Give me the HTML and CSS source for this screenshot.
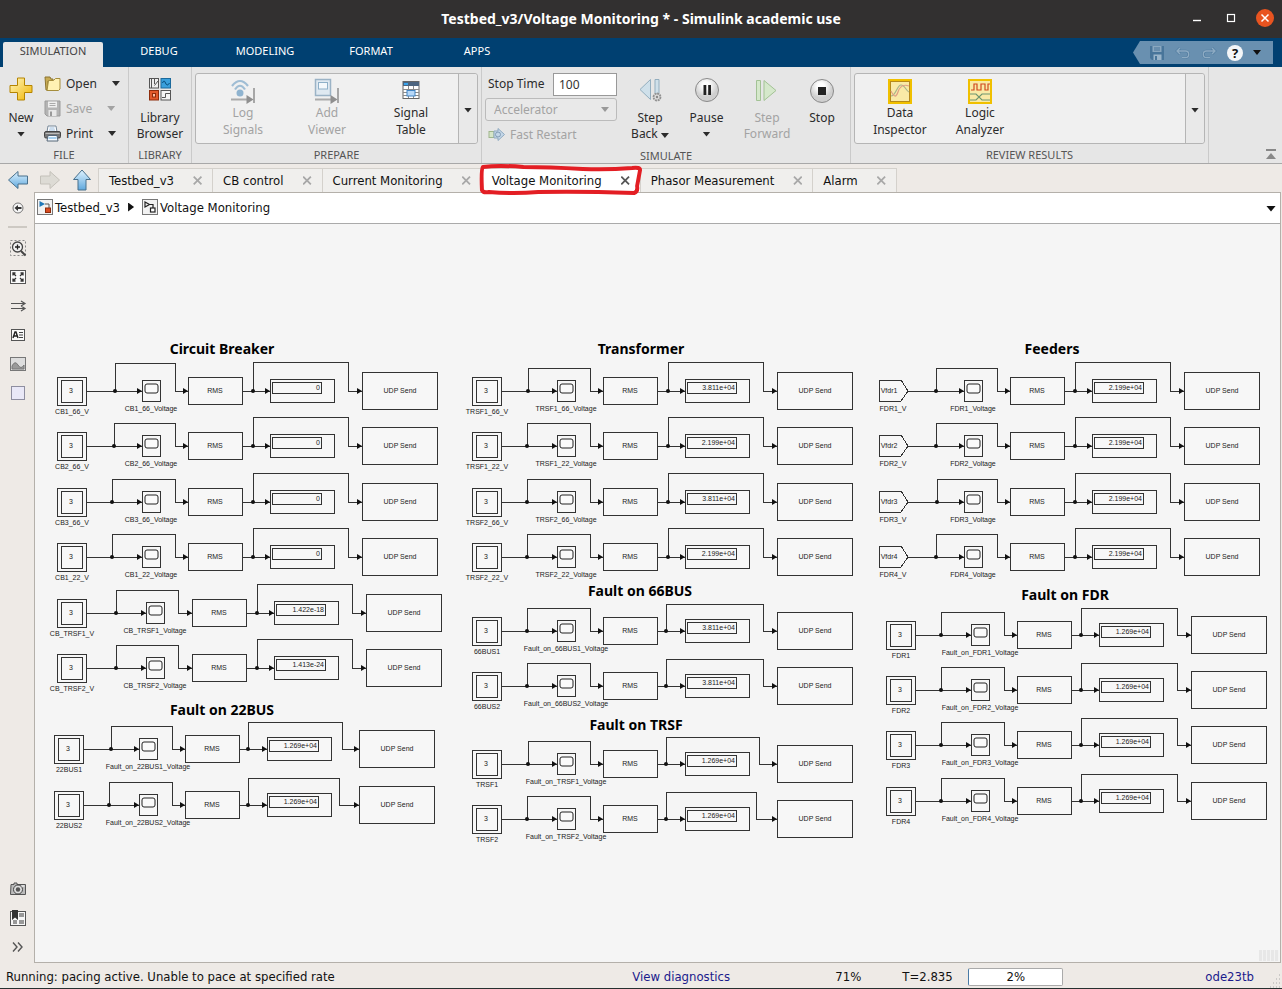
FILE: index.html
```html
<!DOCTYPE html>
<html lang="en">
<head>
<meta charset="utf-8">
<title>Testbed_v3/Voltage Monitoring * - Simulink academic use</title>
<link rel="stylesheet" href="styles.css">
</head>
<body>
<div class="app">
  <header class="titlebar">
    <h1 class="titlebar-text">Testbed_v3/Voltage Monitoring * - Simulink academic use</h1>
    <div class="window-buttons">
      <button class="win-btn" aria-label="Minimize"><svg width="10" height="10"><path d="M1 7.5h8" stroke="#fff" stroke-width="1.4"/></svg></button>
      <button class="win-btn" aria-label="Maximize"><svg width="10" height="10"><rect x="1.5" y="1.5" width="7" height="7" fill="none" stroke="#fff" stroke-width="1.2"/></svg></button>
      <button class="win-btn win-close" aria-label="Close"><svg width="10" height="10"><path d="M1.5 1.5l7 7M8.500 1.500l-7 7" stroke="#fff" stroke-width="1.5"/></svg></button>
    </div>
  </header>

  <nav class="ribbon-tabs">
    <button class="ribbon-tab is-active">SIMULATION</button>
    <button class="ribbon-tab">DEBUG</button>
    <button class="ribbon-tab">MODELING</button>
    <button class="ribbon-tab">FORMAT</button>
    <button class="ribbon-tab">APPS</button>
    <div class="quick-access">
      <button aria-label="Save"><svg width="16" height="16"><path d="M1 1h14v14H3l-2-2z" fill="#48759a"/><path d="M3.500 1h9v6h-9z" fill="#8aa8c0"/><path d="M5 3h6M5 5h6" stroke="#48759a"/><path d="M4.500 9.500h8V15h-8z" fill="#9ab5ca"/><path d="M6 11h2v4H6z" fill="#48759a"/></svg></button>
      <button aria-label="Undo"><svg width="16" height="16"><path d="M5 3L2 6l3 3M2 6h8.500a3 3 0 0 1 0 6.500H7" fill="none" stroke="#507b9f" stroke-width="2.600"/><path d="M5 3L2 6l3 3M2 6h8.500a3 3 0 0 1 0 6.500H7" fill="none" stroke="#8dabc3" stroke-width="1.400"/></svg></button>
      <button aria-label="Redo"><svg width="16" height="16"><path d="M11 3l3 3-3 3M14 6H5.500a3 3 0 0 0 0 6.500H9" fill="none" stroke="#507b9f" stroke-width="2.600"/><path d="M11 3l3 3-3 3M14 6H5.500a3 3 0 0 0 0 6.500H9" fill="none" stroke="#8dabc3" stroke-width="1.400"/></svg></button>
      <button class="help-btn" aria-label="Help">?</button>
      <button aria-label="More"><span class="caret"></span></button>
    </div>
  </nav>

  <div class="ribbon">
    <section class="section section-file">
      <div class="section-body">
        <button class="big-btn new-btn">
          <svg width="24" height="24"><defs><linearGradient id="gold" x1="0" y1="0" x2="1" y2="1"><stop offset="0" stop-color="#fff7c0"/><stop offset="1" stop-color="#f0b400"/></linearGradient></defs><path d="M8.500 1h7v7.500H23v7h-7.500V23h-7v-7.500H1v-7h7.500z" fill="url(#gold)" stroke="#b58400"/></svg>
          <span>New</span><span class="caret-line"><i class="caret"></i></span>
        </button>
        <div class="file-list">
          <button class="row-btn"><svg width="17" height="17"><path d="M1 2h5l1 2h2v2H4v9H2z" fill="#c8ab54" stroke="#8b7430"/><path d="M4.500 5.500h5l2-2H16V14l-1.500 1.500H3z" fill="#fff2b3" stroke="#a58d3c"/></svg><span>Open</span><i class="caret"></i></button>
          <button class="row-btn" disabled><svg width="17" height="17"><path d="M1 1h15v15H3l-2-2z" fill="#b4b4b4" stroke="#9b9b9b"/><path d="M4 1.500h9v6H4z" fill="#eee"/><path d="M5.500 3.500h6M5.500 5.500h6" stroke="#aaa"/><path d="M4.500 10h8v6h-8z" fill="#e8e8e8"/><path d="M6 11.500h2V16H6z" fill="#999"/></svg><span>Save</span><i class="caret"></i></button>
          <button class="row-btn"><svg width="17" height="17"><path d="M4 1h8l1 6H3z" fill="#fff" stroke="#789"/><path d="M5.500 3h5M5 5h6" stroke="#9bd"/><rect x=".5" y="6.500" width="16" height="6.500" rx="1.500" fill="#777" stroke="#444"/><path d="M1.500 8.500h14" stroke="#bbb"/><path d="M4 10.500h9l1 5.500H3z" fill="#f5faff" stroke="#567"/><path d="M4.500 13h8" stroke="#8bc0e8" stroke-width="1.500"/></svg><span>Print</span><i class="caret"></i></button>
        </div>
      </div>
      <h2 class="section-label">FILE</h2>
    </section>

    <section class="section section-library">
      <div class="section-body">
        <button class="big-btn">
          <svg width="24" height="24"><g stroke="#555"><rect x="1.500" y="1.500" width="9" height="9.500" fill="#eee"/><rect x="13" y="1.500" width="9.500" height="9.500" fill="#3aa0dc" stroke="#1c6a9c"/><rect x="1.500" y="13.500" width="9" height="9.500" fill="#e2592a" stroke="#8e2d0c"/><rect x="13" y="13.500" width="9.500" height="9.500" fill="#f4f4f4"/></g><path d="M3.500 2v9M6.500 7V2M6.500 8.500L10 4" stroke="#555" fill="none"/><path d="M14.500 6q1.500-4 3 0t4 0" stroke="#064a77" fill="none"/><rect x="4.500" y="16.500" width="3" height="3.500" fill="#ffc2a6" stroke="#8e2d0c"/><path d="M14 20.500h3.500v-4H22" stroke="#555" fill="none"/></svg>
          <span>Library</span><span>Browser</span>
        </button>
      </div>
      <h2 class="section-label">LIBRARY</h2>
    </section>

    <section class="section section-prepare">
      <div class="section-body">
        <div class="gallery">
          <div class="gallery-items">
            <button class="gallery-btn" disabled>
              <svg width="26" height="26"><g fill="none" stroke="#9fbdd4" stroke-width="2.200"><path d="M2 8Q10-2 18 8"/><path d="M5 11.500Q10 4 15 11.500"/></g><circle cx="10" cy="15" r="3.500" fill="#8fb3cf"/><path d="M1 21.500h16" stroke="#aaa" stroke-width="2"/><path d="M16.500 17l7 4.500-7 4.500z" fill="#8f8f8f"/><path d="M24 10v15" stroke="#8f8f8f" stroke-width="1.500"/></svg>
              <span>Log</span><span>Signals</span></button>
            <button class="gallery-btn" disabled>
              <svg width="26" height="26"><rect x="1.500" y="1.500" width="15" height="16" fill="#dfe9f1" stroke="#9bb3c6" stroke-width="1.500"/><rect x="4.500" y="4.500" width="9" height="6.500" fill="#f4f8fb" stroke="#8fb0c8"/><path d="M1 21.500h16" stroke="#aaa" stroke-width="2"/><path d="M16.500 17l7 4.500-7 4.500z" fill="#8f8f8f"/><path d="M24 10v15" stroke="#8f8f8f" stroke-width="1.500"/></svg>
              <span>Add</span><span>Viewer</span></button>
            <button class="gallery-btn">
              <svg width="26" height="26"><rect x="5" y="3.500" width="16" height="17" fill="#fff" stroke="#666"/><path d="M5 4h16v4H5z" fill="#4d6580"/><path d="M6 5h4v2H6z" fill="#39a4ec"/><path d="M5 11.500h16M5 14.500h16M5 17.500h16M10.500 8v12M15.500 8v12" stroke="#8b8b8b"/><rect x="9" y="12.500" width="8" height="5.500" fill="#b7d8f8" stroke="#4386c5"/></svg>
              <span>Signal</span><span>Table</span></button>
          </div>
          <button class="gallery-more" aria-label="More"><i class="caret"></i></button>
        </div>
      </div>
      <h2 class="section-label">PREPARE</h2>
    </section>

    <section class="section section-simulate">
      <div class="section-body">
        <div class="sim-form">
          <div class="stop-row"><label for="stop">Stop Time</label><input id="stop" class="stop-input" type="text" value="100"></div>
          <div class="mode-wrap"><select class="mode-select" aria-label="Simulation mode" disabled><option>Accelerator</option></select><i class="caret mode-caret"></i></div>
          <button class="row-btn restart-btn" disabled><svg width="17" height="13"><rect x="1" y="3.500" width="5" height="6" fill="#d6e5c8" stroke="#9fb68c"/><path d="M6 3h4V.500l6.500 6-6.500 6V10H6z" fill="#c4d7e8" stroke="#8fa9c0"/><circle cx="10" cy="6.500" r="2.500" fill="none" stroke="#829cb5"/></svg><span>Fast Restart</span></button>
        </div>
        <button class="big-btn step-back"><svg width="26" height="26"><path d="M3 12.500L13.500 2.500v20z" fill="#cfe0ea" stroke="#93aebf"/><path d="M18 2.500h4v14h-4z" fill="#cfe0ea" stroke="#93aebf"/><circle cx="20" cy="20" r="3.500" fill="#ddd" stroke="#929292" stroke-width="1.800" stroke-dasharray="2 .7"/><circle cx="20" cy="20" r="1.200" fill="#888"/></svg><span>Step</span><span class="with-caret">Back <i class="caret"></i></span></button>
        <button class="big-btn pause"><svg width="26" height="26"><defs><radialGradient id="ball" cx=".45" cy=".3"><stop offset=".3" stop-color="#fff"/><stop offset="1" stop-color="#cfcfcf"/></radialGradient></defs><circle cx="13" cy="13" r="11.500" fill="url(#ball)" stroke="#8a8a8a"/><path d="M9.500 8h2.800v10H9.500zM14.200 8H17v10h-2.800z" fill="#222"/></svg><span>Pause</span><span class="caret-line"><i class="caret"></i></span></button>
        <button class="big-btn step-fwd" disabled><svg width="26" height="26"><path d="M2.500 3.500h4v20h-4z" fill="#d5e8cb" stroke="#a3c295"/><path d="M10 3.500L22 13.500 10 23.500z" fill="#d5e8cb" stroke="#a3c295"/></svg><span>Step</span><span>Forward</span></button>
        <button class="big-btn stop-btn"><svg width="26" height="26"><circle cx="13" cy="14" r="11.500" fill="url(#ball)" stroke="#8a8a8a"/><path d="M9 10h8v8H9z" fill="#222"/></svg><span>Stop</span></button>
      </div>
      <h2 class="section-label">SIMULATE</h2>
    </section>

    <section class="section section-review">
      <div class="section-body">
        <div class="gallery">
          <div class="gallery-items">
            <button class="gallery-btn">
              <svg width="26" height="26"><rect x="2" y="2" width="22" height="23" fill="#f9eaa6" stroke="#f0c000" stroke-width="2"/><rect x="3.500" y="3.500" width="19" height="20" fill="none" stroke="#b58a1c"/><path d="M4 18c5 0 6-11 10-11s5 6 8 7" fill="none" stroke="#a9b48a" stroke-width="1.200"/><path d="M4 13c3 6 5 7 7 1s5-8 11-6" fill="none" stroke="#dfa085" stroke-width="1.200"/></svg>
              <span>Data</span><span>Inspector</span></button>
            <button class="gallery-btn">
              <svg width="26" height="26"><rect x="2" y="2" width="22" height="23" fill="#f9eaa6" stroke="#f0c000" stroke-width="2"/><path d="M4 12h3V6h3v6h4V6h4v6h3V6h2" fill="none" stroke="#cf4a20" stroke-width="1.200"/><path d="M3 16h6l6 6h8M3 22h6l6-6h8" fill="none" stroke="#6f9670" stroke-width="1.200"/></svg>
              <span>Logic</span><span>Analyzer</span></button>
          </div>
          <button class="gallery-more" aria-label="More"><i class="caret"></i></button>
        </div>
      </div>
      <h2 class="section-label">REVIEW RESULTS</h2>
    </section>
    <button class="collapse-btn" aria-label="Collapse"><svg width="12" height="12"><path d="M1 2h10" stroke="#888" stroke-width="2"/><path d="M6 5l5 6H1z" fill="#888"/></svg></button>
  </div>

  <div class="doc-bar">
    <svg width="0" height="0" class="defs"><defs><linearGradient id="sky" x1="0" y1="0" x2="0" y2="1"><stop offset="0" stop-color="#e0f3ff"/><stop offset="1" stop-color="#5fa8dd"/></linearGradient></defs></svg>
    <button class="nav-btn" aria-label="Back"><svg width="22" height="20"><path d="M1.500 10L11 1.500v4.500h9.500v8H11v4.500z" fill="url(#sky)" stroke="#49708c"/></svg></button>
    <button class="nav-btn" aria-label="Forward" disabled><svg width="22" height="20"><path d="M20.500 10L11 1.500v4.500H1.500v8H11v4.500z" fill="#dddbd5" stroke="#c4c1ba"/></svg></button>
    <button class="nav-btn" aria-label="Up"><svg width="20" height="22"><path d="M10 1l8.500 9.500H14V21H6V10.500H1.500z" fill="url(#sky)" stroke="#49708c"/></svg></button>
    <div class="doc-tabs">
      <div class="doc-tab"><button>Testbed_v3</button><button class="tab-x" aria-label="Close Testbed_v3"></button></div>
      <div class="doc-tab"><button>CB control</button><button class="tab-x" aria-label="Close CB control"></button></div>
      <div class="doc-tab"><button>Current Monitoring</button><button class="tab-x" aria-label="Close Current Monitoring"></button></div>
      <div class="doc-tab is-current"><button>Voltage Monitoring</button><button class="tab-x" aria-label="Close Voltage Monitoring"></button>
        <svg class="marker" viewBox="0 0 166 32" preserveAspectRatio="none"><path d="M4 3Q2 5 3 26Q4 29 10 28Q35 30 60 28Q100 27 157 29Q161 28 160 22L163 6Q163 3 155 4Q130 6 105 5Q70 3 45 3Q20 1 4 3Z" fill="none" stroke="#e31e24" stroke-width="4" stroke-linejoin="round"/></svg>
      </div>
      <div class="doc-tab"><button>Phasor Measurement</button><button class="tab-x" aria-label="Close Phasor Measurement"></button></div>
      <div class="doc-tab"><button>Alarm</button><button class="tab-x" aria-label="Close Alarm"></button></div>
    </div>
  </div>

  <div class="workspace">
    <aside class="palette">
      <button class="tool" aria-label="Hide browser"><svg width="12" height="12"><circle cx="6" cy="6" r="5" fill="#f5f5f5" stroke="#777"/><path d="M2.500 6L6 3v2h3.500v2H6v2z" fill="#333"/></svg></button>
      <hr class="palette-line">
      <button class="tool" aria-label="Zoom"><svg width="18" height="18"><rect x="1.500" y="1.500" width="15" height="15" fill="none" stroke="#888" stroke-dasharray="2 2"/><circle cx="8.500" cy="8" r="5" fill="#f3f3f3" stroke="#444" stroke-width="1.300"/><path d="M6 8h5M8.500 5.500v5" stroke="#222" stroke-width="1.300"/><path d="M12 12l4.500 4.500" stroke="#444" stroke-width="2"/></svg></button>
      <button class="tool" aria-label="Fit to view"><svg width="18" height="18"><rect x="1.500" y="2.500" width="15" height="13" fill="#fafafa" stroke="#555"/><path d="M4 7.500V5h2.500M11.500 5H14v2.500M14 10.500V13h-2.500M6.500 13H4v-2.500M4 5l3 3M14 5l-3 3M4 13l3-3M14 13l-3-3" fill="none" stroke="#333" stroke-width="1.300"/></svg></button>
      <button class="tool" aria-label="Signals"><svg width="18" height="18"><path d="M2 6.500h13M2 11.500h13M12 4l4 2.500L12 9M12 9l4 2.500-4 2.500" fill="none" stroke="#555" stroke-width="1.200"/></svg></button>
      <button class="tool" aria-label="Annotation"><svg width="18" height="18"><rect x="2.500" y="3.500" width="13" height="11" fill="#fafafa" stroke="#555"/><path d="M4 12l2-6h1l2 6M5 10h3" fill="none" stroke="#222" stroke-width="1.400"/><path d="M10 6.500h4M10 9h4M10 11.500h4" stroke="#444"/></svg></button>
      <button class="tool" aria-label="Image"><svg width="18" height="18"><rect x="1.500" y="2.500" width="15" height="13" fill="#ddd" stroke="#777"/><path d="M3 11q3-6 6-1t6 0v4H3z" fill="#999" stroke="#777"/></svg></button>
      <button class="tool" aria-label="Area"><svg width="18" height="18"><rect x="2.500" y="2.500" width="13" height="13" fill="#e9e8f7" stroke="#8e8ea0"/></svg></button>
      <div class="palette-space"></div>
      <button class="tool" aria-label="Screenshot"><svg width="18" height="18"><path d="M2 4.500h3V3h3v1.500h8.500v10h-15z" fill="#bbb" stroke="#555"/><circle cx="9" cy="9.500" r="4.500" fill="#ddd" stroke="#444"/><circle cx="9" cy="9.500" r="2.200" fill="#555"/><path d="M12.500 6h3" stroke="#fff"/></svg></button>
      <button class="tool" aria-label="Bookmarks"><svg width="18" height="18"><rect x="1.500" y="2.500" width="15" height="14" fill="#f8f8f8" stroke="#555"/><path d="M10 4h5v4h-5zM10 11h5v4h-5zM4 11h4v4H4z" fill="#999"/><path d="M3 1h6v10L6 8.500 3 11z" fill="#333"/></svg></button>
      <button class="tool" aria-label="More tools"><svg width="18" height="18"><path d="M4 4.500l4 4.500-4 4.500M9 4.500l4 4.500-4 4.500" fill="none" stroke="#555" stroke-width="1.400"/></svg></button>
    </aside>
    <main class="editor">
      <div class="breadcrumb">
        <svg width="16" height="16"><rect x=".5" y=".5" width="15" height="15" fill="#f2f2f2" stroke="#777"/><path d="M2.500 2v6l5.500-3z" fill="#1e78b8"/><path d="M8 5h4v4" fill="none" stroke="#555"/><rect x="8.500" y="9" width="5" height="4.500" fill="#d94c22" stroke="#8e2d0c"/></svg>
        <button>Testbed_v3</button>
        <i class="crumb-arrow"></i>
        <svg width="16" height="16"><rect x=".5" y=".5" width="15" height="15" fill="#f2f2f2" stroke="#777"/><path d="M3 3v5l4.500-2.500zM7.500 5.500H11V9" fill="none" stroke="#222" stroke-width="1.200"/><rect x="8.500" y="9" width="4.500" height="4" fill="#fff" stroke="#222" stroke-width="1.200"/></svg>
        <button>Voltage Monitoring</button>
        <button class="crumb-more" aria-label="History"><i class="caret"></i></button>
      </div>
      <div class="canvas"><svg id="diagram" class="diagram" role="img" aria-label="Voltage monitoring block diagram"></svg><span class="grip"></span></div>
    </main>
  </div>

  <footer class="statusbar">
    <span class="status-text">Running: pacing active. Unable to pace at specified rate</span>
    <a class="status-link" href="#">View diagnostics</a>
    <span class="status-zoom">71%</span>
    <span class="status-time">T=2.835</span>
    <span class="status-progress" role="progressbar" aria-label="Simulation progress" aria-valuenow="2">2%</span>
    <a class="status-solver" href="#">ode23tb</a>
    <svg class="resize" width="12" height="14"><path d="M9 1h2M6 5h5M3 9h8M0 13h11" stroke="#aaa" stroke-dasharray="1 2"/></svg>
  </footer>
</div>
<script src="diagram.js"></script>
</body>
</html>
```
FILE: styles.css
```css
* { box-sizing: border-box; }
body { margin: 0; font-family: "DejaVu Sans Condensed", "DejaVu Sans", sans-serif; font-size: 13px; color: #111; }
button { border: 0; padding: 0; margin: 0; background: none; font: inherit; color: inherit; }
h1, h2, hr { margin: 0; font-weight: normal; }
svg { display: block; flex: none; }
.app { display: flex; flex-direction: column; min-height: 100vh; background: #eeeae6; border-bottom: 1px solid #26302f; }
.caret { display: inline-block; width: 8px; height: 5px; background: currentColor; clip-path: polygon(0 0, 100% 0, 50% 100%); }
.defs { position: absolute; }

.titlebar { position: relative; display: flex; align-items: center; justify-content: center; height: 38px; background: #323030; color: #fff; }
.titlebar-text { font: bold 14px/20px "Noto Sans", sans-serif; }
.window-buttons { position: absolute; right: 8px; top: 9px; display: flex; gap: 16px; }
.win-btn { display: grid; place-items: center; width: 18px; height: 18px; }
.win-close { border-radius: 50%; background: #e95420; }

.ribbon-tabs { display: flex; align-items: flex-end; gap: 6px; height: 29px; padding-left: 3px; background: #004071; font: 11px/18px "Noto Sans", sans-serif; color: #fff; }
.ribbon-tab { width: 100px; height: 25px; padding-bottom: 9px; }
.ribbon-tab.is-active { background: #e6e6e6; color: #444; border-radius: 2px 2px 0 0; }
.quick-access { display: flex; align-items: center; gap: 10px; height: 23px; margin: 0 9px 3px auto; padding: 0 12px 0 16px; background: #6990b0; clip-path: polygon(7px 0, 100% 0, 100% 100%, 7px 100%, 0 50%); color: #111; }
.quick-access button { display: grid; place-items: center; }
.help-btn { width: 16px; height: 16px; border-radius: 50%; background: #f4f6f8; font: bold 13px/16px "Noto Sans", sans-serif; }

.ribbon { display: flex; height: 97px; background: #e6e6e6; border-bottom: 1px solid #a8a8a8; font: 12px/16px "Noto Sans", sans-serif; color: #2b2b2b; }
.section { display: flex; flex-direction: column; border-right: 1px solid #cacaca; }
.section-body { display: flex; flex: 1; }
.section-label { font-size: 11px; line-height: 16px; text-align: center; color: #555; }
.section-file { width: 129px; }
.section-library { width: 63px; }
.section-prepare { width: 290px; }
.section-simulate { width: 369px; }
.section-review { width: 358px; }
.big-btn { display: flex; flex-direction: column; align-items: center; padding-top: 10px; }
.big-btn > svg { margin-bottom: 7px; height: 26px; }
.caret-line { display: grid; place-items: center; height: 16px; }
.new-btn { width: 42px; }
.section-library .big-btn { width: 100%; }
button:disabled { color: #a3a3a3; }
.file-list { display: flex; flex-direction: column; padding: 4px 0 0 2px; }
.row-btn { display: flex; align-items: center; height: 25px; }
.row-btn > svg { margin-right: 5px; }
.row-btn > .caret { margin-left: 15px; }
.gallery { display: flex; flex: 1; height: 71px; margin: 6px 3px 0; border: 1px solid #b5b5b5; border-radius: 3px; background: #f0f0f0; }
.gallery-items { display: flex; flex: 1; padding-left: 5px; }
.gallery-btn { display: flex; flex-direction: column; align-items: center; width: 84px; padding-bottom: 2px; justify-content: center; line-height: 17px; }
.section-review .gallery-btn { width: 80px; }
.gallery-more { width: 19px; border-left: 1px solid #b5b5b5; background: #e9e9e9; border-radius: 0 3px 3px 0; }
.sim-form { display: flex; flex-direction: column; width: 138px; padding: 6px 3px 0; }
.stop-row { display: flex; justify-content: space-between; align-items: center; padding-left: 3px; height: 22px; }
.stop-input { width: 64px; height: 23px; padding: 0 5px; border: 1px solid #999; background: #fff; font: inherit; color: #333; }
.mode-wrap { position: relative; margin-top: 3px; height: 23px; }
.mode-select { appearance: none; width: 100%; height: 100%; padding: 0 8px; border: 1px solid #bbb; border-radius: 3px; background: #e9e9e9; font: inherit; color: #a3a3a3; opacity: 1; }
.mode-caret { position: absolute; right: 8px; top: 9px; color: #999; }
.restart-btn { padding-left: 3px; height: 27px; }
.step-back { width: 60px; }
.pause { width: 53px; }
.step-fwd { width: 68px; }
.stop-btn { width: 42px; }
.collapse-btn { align-self: flex-end; margin: 0 5px 3px auto; }

.doc-bar { display: flex; align-items: center; height: 28px; padding: 4px 0 0 2px; }
.nav-btn { display: grid; place-items: center; width: 32px; }
.doc-tabs { display: flex; align-self: stretch; }
.doc-tab { position: relative; display: flex; align-items: center; gap: 19px; padding: 0 10px; border: 1px solid #d4d1cc; border-width: 1px 1px 0 0; background: #f0efed; }
.doc-tab:first-child { border-left-width: 1px; }
.doc-tab.is-current { background: #fff; }
.tab-x { width: 9px; height: 9px; background: #a8a8a8; clip-path: polygon(0 14%, 14% 0, 50% 36%, 86% 0, 100% 14%, 64% 50%, 100% 86%, 86% 100%, 50% 64%, 14% 100%, 0 86%, 36% 50%); }
.is-current .tab-x { background: #555; }
.marker { position: absolute; z-index: 1; left: -3px; top: -5px; width: calc(100% + 6px); height: 32px; }

.workspace { display: flex; flex: 1; }
.palette { display: flex; flex-direction: column; width: 34px; padding-bottom: 2px; }
.tool { display: grid; place-items: center; height: 29px; padding-left: 2px; }
.palette > .tool:first-child { height: 32px; }
.palette-line { width: 19px; height: 2px; margin: 2px 0 5px 8px; border: 0; background: #cdc9c3; }
.palette-space { flex: 1; }
.editor { display: flex; flex-direction: column; flex: 1; min-width: 0; margin-right: 1px; border: 1px solid #b4b0aa; }
.breadcrumb { display: flex; align-items: center; gap: 2px; height: 31px; padding: 0 4px 2px 2px; background: #fff; border-bottom: 1px solid #aaa; }
.crumb-arrow { width: 6px; height: 9px; margin: 0 6px; background: #111; clip-path: polygon(0 0, 100% 50%, 0 100%); }
.crumb-more { margin-left: auto; }
.crumb-more .caret { width: 10px; height: 6px; }
.canvas { position: relative; flex: 1; background: #f5f5f5; }
.diagram { position: absolute; width: 100%; height: 100%; }
.grip { position: absolute; right: 1px; bottom: 1px; width: 20px; height: 11px; background: repeating-linear-gradient(90deg, #e7e7e7 0 3px, #f3f3f3 3px 4px); }

.wire { fill: none; stroke: #333; shape-rendering: crispEdges; }
.block { fill: #f7f7f7; stroke: #333; shape-rendering: crispEdges; }
.screen { fill: #fafafa; stroke: #222; }
.solid { fill: #111; }
.text { font: 7px "Liberation Sans", sans-serif; fill: #222; text-anchor: middle; }
.value { text-anchor: end; }
.heading { font: bold 14px "Noto Sans", sans-serif; fill: #000; text-anchor: middle; }

.statusbar { display: flex; align-items: center; height: 25px; padding: 2px 0 0 6px; }
.statusbar a { color: #1a1a8c; text-decoration: none; }
.status-text { flex: 1; }
.status-link { width: 203px; }
.status-zoom { width: 67px; }
.status-time { width: 66px; }
.status-progress { width: 95px; height: 18px; border: 1px solid #aaa; border-left-color: #4a7ba6; border-radius: 2px; background: #fff; text-align: center; line-height: 16px; }
.status-solver { margin-left: 142px; }
.resize { margin-left: 16px; align-self: flex-end; }
```
FILE: diagram.js
```js
const svg = document.getElementById("diagram");

// Each group: left edge, heading, wire taps measured from the left edge, and rows.
// Row: [centre y, source label, value, first tap x, second drop x]
const groups = [
  { x: 22, title: "Circuit Breaker", tx: 187, ty: 130, rise2: 29, rows: [
    [167, "CB1_66_V", "0", 58], [222, "CB2_66_V", "0", 57], [278, "CB3_66_V", "0", 55], [333, "CB1_22_V", "0", 55]] },
  { x: 22, shift: 4, drop1: 121, tap2: 200, drop2: 295, rise2: 29, rows: [
    [389, "CB_TRSF1_V", "1.422e-18", 59], [444, "CB_TRSF2_V", "1.413e-24", 59]] },
  { x: 19, title: "Fault on 22BUS", tx: 187, ty: 491, tap2: 194, rise2: 27, fault: true, rows: [
    [525, "22BUS1", "1.269e+04", 57, 288], [581, "22BUS2", "1.269e+04", 55, 285]] },
  { x: 437, title: "Transformer", tx: 606, ty: 130, rise2: 29, rows: [
    [167, "TRSF1_66_V", "3.811e+04", 56], [222, "TRSF1_22_V", "2.199e+04", 55],
    [278, "TRSF2_66_V", "3.811e+04", 55], [333, "TRSF2_22_V", "2.199e+04", 55]] },
  { x: 437, title: "Fault on 66BUS", tx: 605, ty: 372, tap2: 194, rise2: 27, fault: true, rows: [
    [407, "66BUS1", "3.811e+04", 55], [462, "66BUS2", "3.811e+04", 55]] },
  { x: 437, title: "Fault on TRSF", tx: 601, ty: 506, tap2: 194, rise2: 27, fault: true, rows: [
    [540, "TRSF1", "1.269e+04", 56, 287], [595, "TRSF2", "1.269e+04", 55, 284]] },
  { x: 844, title: "Feeders", tx: 1017, ty: 130, rise2: 29, tag: true, rows: [
    [167, "FDR1_V", "2.199e+04", 57], [222, "FDR2_V", "2.199e+04", 57],
    [278, "FDR3_V", "2.199e+04", 58], [333, "FDR4_V", "2.199e+04", 57]] },
  { x: 851, title: "Fault on FDR", tx: 1030, ty: 376, tap2: 195, rise2: 27, fault: true, rows: [
    [411, "FDR1", "1.269e+04", 55], [466, "FDR2", "1.269e+04", 55],
    [521, "FDR3", "1.269e+04", 55], [577, "FDR4", "1.269e+04", 55]] },
];

const rect = (x, y, w, h) => `<rect class="block" x="${x}" y="${y}" width="${w}" height="${h}"/>`;
const text = (x, y, s, cls = "") => `<text class="text ${cls}" x="${x}" y="${y}">${s}</text>`;
const wire = (d) => `<path class="wire" d="${d}"/>`;
const arrow = (x) => `<path class="solid" d="M${x} 0l-5-3v6z"/>`;
const dot = (x) => `<circle class="solid" cx="${x}" cy="0" r="2"/>`;

function row(group, [y, label, value, tap1, dropOverride], index) {
  const s = group.shift || 0;
  const tap2 = group.tap2 || 196;
  const drop1 = group.drop1 || 118;
  const drop2 = dropOverride || group.drop2 || 291;
  const rise1 = label === "CB1_66_V" ? 28 : 23;
  const scope = group.fault ? `Fault_on_${label}_Voltage` : `${label}oltage`;
  const source = group.tag
    ? `<path class="block" d="M0 -11h22l7 11-7 10H0z"/>` + text(10, 2, `Vfdr${index + 1}`) + text(14, 20, label)
    : rect(0, -14, 29, 28) + rect(4, -11, 21, 22) + text(14, 2, "3") + text(15, 23, label);
  return `<g transform="translate(${group.x} ${y})">` +
    wire(`M29 0H${85 + s}M${tap1} 0V-${rise1}H${drop1}V0H${131 + s}`) +
    wire(`M${185 + s} 0H${213 + s}M${tap2} 0V-${group.rise2}H${drop2}V0H${305 + s}`) +
    dot(tap1) + dot(tap2) + arrow(85 + s) + arrow(131 + s) + arrow(213 + s) + arrow(305 + s) +
    source +
    rect(85 + s, -11, 18, 21) + `<rect class="screen" x="${88 + s}" y="-7" width="13" height="9" rx="2"/>` +
    text(94 + s, 20, scope) +
    rect(131 + s, -14, 54, 27) + text(158 + s, 2, "RMS") +
    rect(213 + s, -12, 64, 23) + rect(215 + s, -9, 49, 11) + text(263 + s, -1, value, "value") +
    rect(305 + s, -19, 75, 37) + text(343 + s, 2, "UDP Send") +
    `</g>`;
}

svg.innerHTML = groups.map((g) =>
  (g.title ? `<text class="heading" x="${g.tx}" y="${g.ty}">${g.title}</text>` : "") +
  g.rows.map((r, i) => row(g, r, i)).join("")
).join("");
```
